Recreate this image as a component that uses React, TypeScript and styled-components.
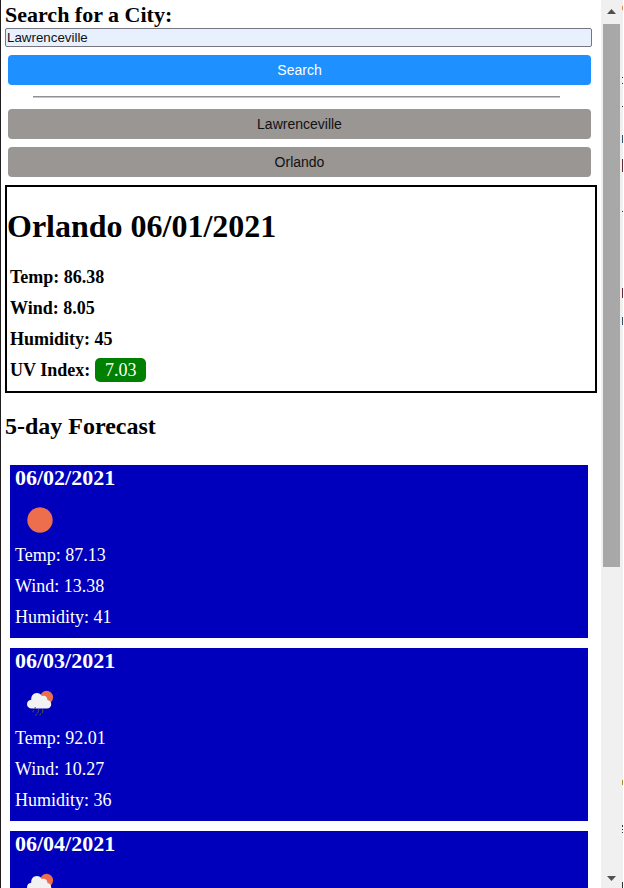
import React from "react";
import styled, { createGlobalStyle } from "styled-components";

const GlobalStyle = createGlobalStyle`
  * { box-sizing: border-box; }
  html, body { margin: 0; overflow: hidden; background: #fff; }
  body { font-family: "Liberation Serif", "Times New Roman", serif; color: #000; }
`;

const Window = styled.div`
  display: flex;
  width: 624px;
  height: 888px;
  overflow: hidden;
  border-left: 1px solid #221e20;
`;

const Page = styled.main`
  flex: 0 0 600px;
  height: 888px;
  overflow: hidden;
  padding: 2px 4px 0;
`;

const SearchPanel = styled.form`
  display: flex;
  flex-direction: column;
  width: 587px;
`;

const SearchTitle = styled.label`
  font-size: 22px;
  font-weight: bold;
  line-height: 26px;
  height: 26px;
  white-space: nowrap;
`;

const CityInput = styled.input`
  height: 19px;
  margin: 0;
  padding: 1px 1px;
  border: 1px solid #767680;
  border-radius: 2px;
  outline: none;
  background: #e8f0fe;
  color: #111;
  font: 13.333px "Liberation Sans", Arial, sans-serif;
`;

const CityButton = styled.button<{ $primary?: boolean }>`
  height: 30px;
  width: 583px;
  margin: 8px 0 0 3px;
  padding: 0;
  border: 0;
  border-radius: 4px;
  background: ${(p) => (p.$primary ? "#1e90ff" : "#9a9694")};
  color: ${(p) => (p.$primary ? "#fff" : "#111")};
  font: 14px/30px "Liberation Sans", Arial, sans-serif;
`;

const Divider = styled.hr`
  width: 527px;
  height: 2px;
  margin: 11px 0 3px 28px;
  border: 0;
  border-top: 1px solid #909094;
  border-bottom: 1px solid #c8c8c8;
`;

const Current = styled.section`
  width: 592px;
  height: 208px;
  margin-top: 8px;
  padding: 21px 0 0;
  border: 2px solid #000;
`;

const CityHeading = styled.h1`
  margin: 0 0 22px;
  font-size: 32px;
  line-height: 37px;
  white-space: nowrap;
`;

const Reading = styled.p<{ $strong?: boolean }>`
  display: flex;
  align-items: center;
  height: 21px;
  margin: 0 0 10px;
  padding-left: ${(p) => (p.$strong ? 3 : 5)}px;
  font-size: 18px;
  font-weight: ${(p) => (p.$strong ? "bold" : "normal")};
  line-height: 21px;
  white-space: pre;
`;

const UvBadge = styled.span`
  height: 24px;
  width: 51px;
  margin: 0 0 2px 5px;
  border-radius: 5px;
  background: #008000;
  color: #fff;
  font-weight: normal;
  line-height: 25px;
  text-align: center;
`;

const ForecastTitle = styled.h2`
  margin: 20px 0 25px;
  font-size: 24px;
  line-height: 27px;
  white-space: nowrap;
`;

const DayCard = styled.article`
  width: 578px;
  height: 173px;
  margin: 0 0 10px 5px;
  background: #0000bc;
  color: #fff;
`;

const DayDate = styled.h3`
  margin: 0;
  padding-left: 5px;
  font-size: 22px;
  line-height: 26px;
`;

const WeatherIcon = styled.svg`
  display: block;
  width: 50px;
  height: 50px;
  margin: 4px 0 0 5px;
`;

const Readings = styled.div`
  padding-top: 0;
`;

const Scrollbar = styled.aside`
  display: flex;
  flex-direction: column;
  flex: 0 0 21px;
  height: 888px;
  padding: 0 2px;
  background: #f0f0f0;
`;

const Arrow = styled.svg`
  display: block;
  width: 17px;
  height: 24px;
  fill: #505050;
`;

const Thumb = styled.div`
  height: 543px;
  margin-bottom: 297px;
  background: #a8a8a8;
`;

const WindowEdge = styled.svg`
  width: 2px;
  height: 888px;
  flex: 0 0 2px;
`;

const SunIcon = () => (
  <WeatherIcon viewBox="0 0 50 50">
    <circle cx="25" cy="25" r="12.7" fill="#ec6e4c" />
  </WeatherIcon>
);

const RainIcon = () => (
  <WeatherIcon viewBox="0 0 50 50">
    <circle cx="31.6" cy="19.3" r="6.5" fill="#ec6e4c" />
    <path
      d="M16.8 30.5C14 30.5 12 28.8 12 26.2C12 23.6 13.7 22 16.2 21.8C16 18 18.2 15 21.8 15C24.2 15 25.8 16.2 26.8 18.2C27.4 17.9 28 17.8 28.7 17.8C31 17.8 32.4 19.6 32.4 22C34.7 22.2 36.2 23.8 36.2 26.2C36.2 28.8 34.5 30.5 32 30.5Z"
      fill="#f2f2f2"
    />
    <path
      d="M20.2 29.6l-.3.7M23.7 31.6l-.4.8M27.8 31.6l-.5 1M18.6 32.4l-.8 1.4M23.3 33.5l-.7 1.2M28 33.3l-.7 1.4M21.4 36.2l-.6 1M25.6 35.8l-.7 1.2"
      stroke="#48484a"
      strokeWidth="1.1"
      strokeLinecap="round"
    />
  </WeatherIcon>
);

const days = [
  { date: "06/02/2021", Icon: SunIcon, temp: "87.13", wind: "13.38", humidity: "41" },
  { date: "06/03/2021", Icon: RainIcon, temp: "92.01", wind: "10.27", humidity: "36" },
  { date: "06/04/2021", Icon: RainIcon },
];

export default function App() {
  return (
    <>
      <GlobalStyle />
      <Window>
        <Page>
          <SearchPanel onSubmit={(e) => e.preventDefault()}>
            <SearchTitle htmlFor="city">Search for a City:</SearchTitle>
            <CityInput id="city" defaultValue="Lawrenceville" />
            <CityButton $primary>Search</CityButton>
            <Divider />
            <CityButton type="button">Lawrenceville</CityButton>
            <CityButton type="button">Orlando</CityButton>
          </SearchPanel>
          <Current>
            <CityHeading>Orlando 06/01/2021</CityHeading>
            <Reading $strong>Temp: 86.38</Reading>
            <Reading $strong>Wind: 8.05</Reading>
            <Reading $strong>Humidity: 45</Reading>
            <Reading $strong>
              UV Index:<UvBadge>7.03</UvBadge>
            </Reading>
          </Current>
          <ForecastTitle>5-day Forecast</ForecastTitle>
          {days.map(({ date, Icon, temp, wind, humidity }) => (
            <DayCard key={date}>
              <DayDate>{date}</DayDate>
              <Icon />
              {temp && (
                <Readings>
                  <Reading>Temp: {temp}</Reading>
                  <Reading>Wind: {wind}</Reading>
                  <Reading>Humidity: {humidity}</Reading>
                </Readings>
              )}
            </DayCard>
          ))}
        </Page>
        <Scrollbar>
          <Arrow viewBox="0 0 17 24">
            <path d="M4 14L8.5 9L13 14Z" />
          </Arrow>
          <Thumb />
          <Arrow viewBox="0 0 17 24">
            <path d="M4 12L8.5 17L13 12Z" />
          </Arrow>
        </Scrollbar>
        <WindowEdge viewBox="0 0 2 888" shapeRendering="crispEdges">
          <path d="M0 0h1v888h-1z" fill="#f0f0f0" />
          <path d="M0 77h1v1h-1zM0 83h1v1h-1zM0 106h1v1h-1zM0 211h1v1h-1z" fill="#333" />
          <path d="M0 6h1v4h-1z" fill="#d88a50" />
          <path d="M0 135h1v8h-1zM0 317h1v8h-1z" fill="#36536c" />
          <path d="M0 159h1v13h-1zM0 288h1v10h-1z" fill="#653039" />
          <path d="M0 780h1v5h-1z" fill="#9b8a3a" />
          <path d="M0 825h1v2h-1zM0 829h1v1h-1zM0 832h1v1h-1zM0 882h1v6h-1z" fill="#333" />
        </WindowEdge>
      </Window>
    </>
  );
}
